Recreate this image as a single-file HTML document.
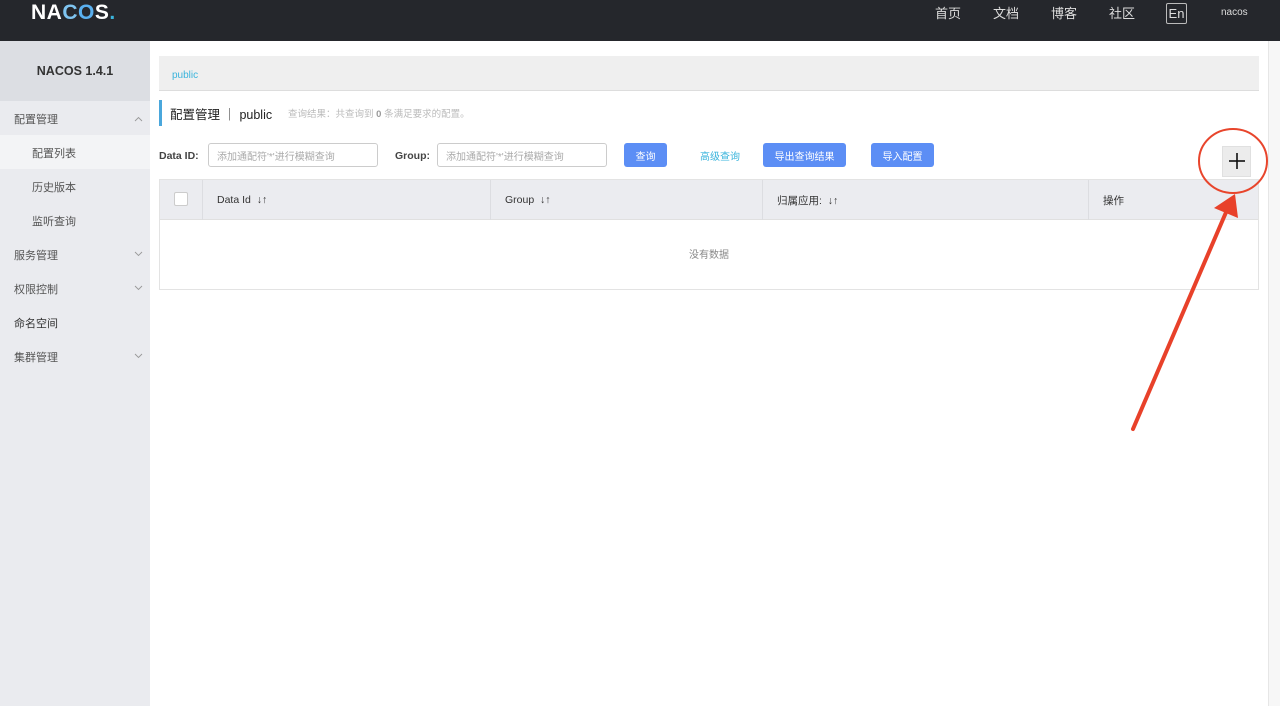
<!DOCTYPE html>
<html><head><meta charset="utf-8">
<style>
*{margin:0;padding:0;box-sizing:border-box}
body{width:1280px;height:706px;overflow:hidden;background:#fff;font-family:"Liberation Sans","Noto Sans CJK SC",sans-serif;position:relative;color:#333}
.top{position:absolute;left:0;top:0;width:1280px;height:41px;background:#25272c}
.logo{position:absolute;left:31px;top:1px;color:#fff;font-size:21px;font-weight:bold;letter-spacing:0.5px}
.nav{position:absolute;top:3px;color:#ddd;font-size:13px}
.en{position:absolute;left:1166px;top:3px;width:21px;height:21px;border:1px solid #bbb;border-radius:2px;color:#ddd;font-size:13px;display:flex;align-items:center;justify-content:center}
.side{position:absolute;left:0;top:41px;width:150px;height:665px;background:#eaebef}
.side .hd{height:60px;background:#dcdee3;text-align:center;line-height:60px;font-weight:bold;font-size:12.5px;color:#333}
.mi{position:absolute;left:14px;font-size:11px;color:#555;line-height:14px}
.sub{position:absolute;left:32px;font-size:11px;color:#555;line-height:14px}
.sel{position:absolute;left:0;top:135px;width:150px;height:34px;background:#f3f4f6}
.scroll{position:absolute;left:1268px;top:41px;width:12px;height:665px;background:#f7f7f7;border-left:1px solid #e6e6e6}
.bc{position:absolute;left:159px;top:56px;width:1100px;height:35px;background:#efefef;border-bottom:1px solid #ddd}
.bc span{position:absolute;left:13px;top:14px;font-size:10px;color:#3ab4dc}
.title{position:absolute;left:159px;top:100px;height:26px;border-left:3px solid #4aa7dc;padding-left:8px;font-size:12.5px;display:flex;align-items:center;color:#222}
.res{position:absolute;left:288px;top:106px;font-size:9.5px;color:#bbb}
.lbl{position:absolute;top:150px;font-size:10.5px;font-weight:bold;color:#444}
.inp{position:absolute;top:143px;width:170px;height:24px;border:1px solid #ccc;border-radius:3px;font-size:10px;color:#aaa;padding-left:8px;display:flex;align-items:center}
.btn{position:absolute;top:143px;height:24px;background:#5c8ef5;color:#fff;border-radius:3px;font-size:10px;display:flex;align-items:center;justify-content:center}
.adv{position:absolute;left:700px;top:148px;font-size:10px;color:#3ab4dc}
.plus{position:absolute;left:1222px;top:146px;width:29px;height:31px;background:#ececec;border:1px solid #e0e0e0}
.tbl{position:absolute;left:159px;top:179px;width:1100px;height:111px;border:1px solid #e3e3e3}
.th{position:absolute;left:0;top:0;width:1098px;height:40px;background:#ebecf0;border-bottom:1px solid #e0e0e0}
.th div{position:absolute;top:0;height:40px;display:flex;align-items:center;font-size:10.5px;color:#333;border-left:1px solid #dcdde1;padding-left:14px}
.cb{position:absolute;left:14px;top:12px;width:14px;height:14px;border:1px solid #ccc;border-radius:2px;background:#fff}
.nd{position:absolute;left:0;top:66px;width:1098px;text-align:center;font-size:10px;color:#888}
</style></head><body>
<div class="top">
<div class="logo">NA<span style="color:#7fc4f0">C</span><span style="color:#5ab0ef">O</span>S<span style="color:#3ab4dc">.</span></div>
<span class="nav" style="left:935px">首页</span>
<span class="nav" style="left:993px">文档</span>
<span class="nav" style="left:1051px">博客</span>
<span class="nav" style="left:1109px">社区</span>
<div class="en">En</div>
<span class="nav" style="left:1221px;font-size:10px;top:7px">nacos</span>
</div>
<div class="side"><div class="hd">NACOS 1.4.1</div></div>
<div class="sel"></div>
<span class="mi" style="top:113px">配置管理</span>
<span class="sub" style="top:147px">配置列表</span>
<span class="sub" style="top:181px">历史版本</span>
<span class="sub" style="top:215px">监听查询</span>
<span class="mi" style="top:249px">服务管理</span>
<span class="mi" style="top:283px">权限控制</span>
<span class="mi" style="top:317px;color:#333">命名空间</span>
<span class="mi" style="top:351px">集群管理</span>
<div class="scroll"></div>
<div class="bc"><span>public</span></div>
<div class="title">配置管理 ｜ public</div>
<div class="res">查询结果：共查询到 <b style="color:#999">0</b> 条满足要求的配置。</div>
<span class="lbl" style="left:159px">Data ID:</span>
<div class="inp" style="left:208px">添加通配符'*'进行模糊查询</div>
<span class="lbl" style="left:395px">Group:</span>
<div class="inp" style="left:437px">添加通配符'*'进行模糊查询</div>
<div class="btn" style="left:624px;width:43px">查询</div>
<span class="adv">高级查询</span>
<div class="btn" style="left:763px;width:83px">导出查询结果</div>
<div class="btn" style="left:871px;width:63px">导入配置</div>
<div class="plus"></div>
<div class="tbl">
<div class="th">
<div style="left:0;border:none;width:42px"><span class="cb"></span></div>
<div style="left:42px;width:288px">Data Id &nbsp;↓↑</div>
<div style="left:330px;width:272px">Group &nbsp;↓↑</div>
<div style="left:602px;width:326px">归属应用: &nbsp;↓↑</div>
<div style="left:928px;width:170px">操作</div>
</div>
<div class="nd">没有数据</div>
</div>
<svg style="position:absolute;left:0;top:0" width="1280" height="706">
<g fill="none" stroke="#999" stroke-width="0.9">
<polyline points="135,121 138.5,117.5 142,121"/>
<polyline points="135,252 138.5,255.5 142,252"/>
<polyline points="135,286 138.5,289.5 142,286"/>
<polyline points="135,354 138.5,357.5 142,354"/>
</g>
<line x1="1229" y1="161" x2="1245" y2="161" stroke="#111" stroke-width="1.6"/>
<line x1="1237" y1="153" x2="1237" y2="169" stroke="#111" stroke-width="1.6"/>
<ellipse cx="1233" cy="161" rx="34" ry="32" fill="none" stroke="#e8452c" stroke-width="2"/>
<line x1="1133" y1="429" x2="1227" y2="210" stroke="#e8412a" stroke-width="4" stroke-linecap="round"/>
<polygon points="1235,194 1214,208 1238,218" fill="#e8412a"/>
</svg>
</body></html>
